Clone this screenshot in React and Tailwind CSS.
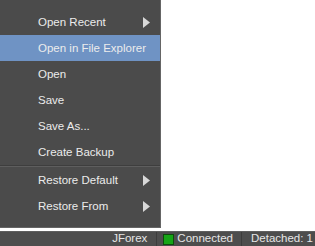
import React from 'react'

const items = [
  { label: 'Open Recent', sub: true },
  { label: 'Open in File Explorer', active: true },
  { label: 'Open' },
  { label: 'Save' },
  { label: 'Save As...' },
  { label: 'Create Backup' },
  { sep: true },
  { label: 'Restore Default', sub: true },
  { label: 'Restore From', sub: true },
]

const Arrow = () => (
  <svg width="7" height="11" viewBox="0 0 7 11" className="absolute left-[143px] top-[8px]">
    <path d="M0 0 L7 5.5 L0 11 Z" fill="#d8d8d8" />
  </svg>
)

const App = () => {
  return (
    <div className="w-[315px] h-[246px] bg-white flex flex-col font-['Liberation_Sans',sans-serif] text-[11.5px]">
      {/* Popup menu */}
      <div className="w-[161px] h-[228px] bg-[#4b4b4b] border-r border-b border-[#656565] pt-[9px]">
        {items.map((item, i) =>
          item.sep ? (
            <div key={i} className="h-[2px] border-t border-[#3e3e3e] bg-[#5e5e5e]" />
          ) : (
            <div
              key={i}
              className={`relative h-[26px] flex items-center pl-[38px] pt-[1px] text-[#ececec] ${item.active ? 'bg-[#6f93c4]' : ''}`}
            >
              {item.label}
              {item.sub && <Arrow />}
            </div>
          )
        )}
      </div>

      {/* Status bar */}
      <div className="mt-[3px] h-[15px] bg-[#4d4d4d] border-t border-[#5e5e5e] flex items-center justify-end text-[#e6e6e6] text-[11.5px] leading-none">
        <span className="pr-[9px]">JForex</span>
        <div className="w-px h-full bg-[#3c3c3c]" />
        <div className="flex items-center gap-[3px] pl-[6px] pr-[8px]">
          <span className="w-[11px] h-[11px] bg-[#16a516] border border-[#0c4d0c]" />
          <span>Connected</span>
        </div>
        <div className="w-px h-full bg-[#3c3c3c]" />
        <span className="pl-[9px] pr-[2px]">Detached: 1</span>
      </div>
    </div>
  )
}

export default App
